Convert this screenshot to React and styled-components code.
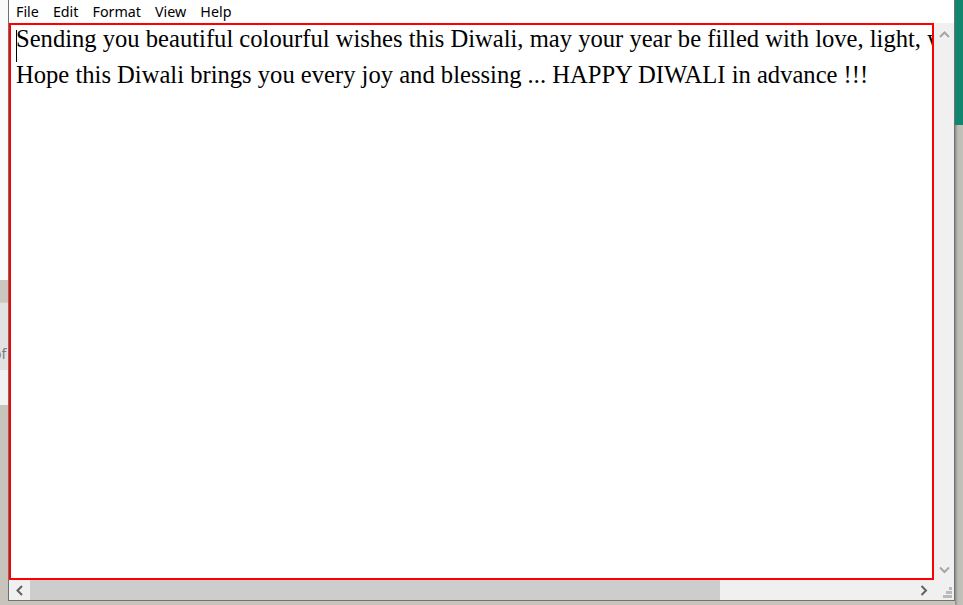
import React from 'react';
import styled, { createGlobalStyle } from 'styled-components';

const GlobalStyle = createGlobalStyle`
  html, body {
    margin: 0;
    padding: 0;
  }
  body {
    width: 963px;
    height: 605px;
    overflow: hidden;
    background: #c8c4bc;
  }
`;

const Desktop = styled.div`
  display: grid;
  grid-template-columns: 8px 947px 8px;
  width: 963px;
  height: 605px;
  background: #c8c4bc;
`;

const Strip = styled.div`
  display: flex;
  flex-direction: column;
  height: 605px;
  overflow: hidden;
`;

const StripPart = styled.div`
  height: ${p => p.h}px;
  flex: ${p => (p.grow ? 1 : 'none')};
  background: ${p => p.bg};
  border-top: ${p => (p.line ? '1px solid #cfcfcf' : 'none')};
  overflow: hidden;
  display: flex;
  align-items: flex-start;
  padding-top: ${p => p.pt || 0}px;
  box-sizing: border-box;
`;

const Fragment = styled.span`
  font-family: "Noto Sans", sans-serif;
  font-size: 14px;
  line-height: 18px;
  color: #7a7a7a;
  margin-left: -7px;
  white-space: nowrap;
`;

const Window = styled.div`
  align-self: start;
  height: 601px;
  display: flex;
  flex-direction: column;
  border: 1px solid #707070;
  border-top: none;
  box-sizing: border-box;
  background: #fff;
`;

const MenuBar = styled.div`
  height: 23px;
  display: flex;
  align-items: center;
  background: #fff;
  flex: none;
`;

const MenuItem = styled.span`
  font-family: "Noto Sans", sans-serif;
  font-size: 14.3px;
  color: #000;
  padding: 0 7px;
  line-height: 19px;
`;

const Body = styled.div`
  flex: 1;
  display: flex;
  min-height: 0;
`;

const EditArea = styled.div`
  flex: 1;
  position: relative;
  border: 2px solid #ff0000;
  background: #fff;
  overflow: hidden;
`;

const Text = styled.div`
  margin-top: -4px;
  padding-left: 5px;
  font-family: "Liberation Serif", "Times New Roman", serif;
  font-size: 24.6px;
  line-height: 36px;
  white-space: pre;
  color: #000;
`;

const Caret = styled.div`
  position: absolute;
  left: 5px;
  top: 5px;
  width: 1px;
  height: 32px;
  background: #000;
`;

const VScroll = styled.div`
  width: 20px;
  flex: none;
  background: #f0f0f0;
  display: flex;
  flex-direction: column;
  justify-content: space-between;
`;

const ArrowBtn = styled.div`
  height: ${p => p.h || 20}px;
  width: ${p => p.w || 20}px;
  flex: none;
  display: flex;
  align-items: center;
  justify-content: center;
  background: #f0f0f0;
`;

const BottomRow = styled.div`
  height: 20px;
  flex: none;
  display: flex;
  background: #f0f0f0;
`;

const Thumb = styled.div`
  width: 690px;
  flex: none;
  background: #cdcdcd;
`;

const Track = styled.div`
  flex: 1;
  background: #f0f0f0;
`;

const Corner = styled.div`
  width: 20px;
  flex: none;
  background: #f0f0f0;
  display: flex;
  align-items: flex-end;
  justify-content: flex-end;
`;

const Chevron = ({ dir, color }) => {
  const pts = {
    up: '1,6 5.5,1.5 10,6',
    down: '1,1.5 5.5,6 10,1.5',
    left: '6,1 1.5,5.5 6,10',
    right: '1.5,1 6,5.5 1.5,10',
  }[dir];
  const vertical = dir === 'up' || dir === 'down';
  return (
    <svg width={vertical ? 11 : 8} height={vertical ? 8 : 11} viewBox={vertical ? '0 0 11 8' : '0 0 8 11'}>
      <polyline points={pts} fill="none" stroke={color} strokeWidth="2" />
    </svg>
  );
};

const Grip = () => (
  <svg width="14" height="14" viewBox="0 0 14 14">
    {[[9, 1], [6, 5], [9, 5], [3, 9], [6, 9], [9, 9]].map(([x, y], i) => (
      <rect key={i} x={x} y={y} width="3" height="3" fill="#b9b9b9" />
    ))}
  </svg>
);

export default function App() {
  return (
    <>
      <GlobalStyle />
      <Desktop>
        <Strip>
          <StripPart h={280} bg="#fafafa" />
          <StripPart h={22} bg="#cbc7bf" />
          <StripPart h={68} bg="#e2e2e2" line pt={42}>
            <Fragment>of</Fragment>
          </StripPart>
          <StripPart h={35} bg="#f2f2f2" />
          <StripPart grow bg="#c8c4bc" />
        </Strip>

        <Window>
          <MenuBar>
            <MenuItem>File</MenuItem>
            <MenuItem>Edit</MenuItem>
            <MenuItem>Format</MenuItem>
            <MenuItem>View</MenuItem>
            <MenuItem>Help</MenuItem>
          </MenuBar>
          <Body>
            <EditArea>
              <Text>
                {'Sending you beautiful colourful wishes this Diwali, may your year be filled with love, light, warmth and happiness.\nHope this Diwali brings you every joy and blessing ... HAPPY DIWALI in advance !!!'}
              </Text>
              <Caret />
            </EditArea>
            <VScroll>
              <ArrowBtn h={23}>
                <Chevron dir="up" color="#a6a6a6" />
              </ArrowBtn>
              <ArrowBtn h={21}>
                <Chevron dir="down" color="#a6a6a6" />
              </ArrowBtn>
            </VScroll>
          </Body>
          <BottomRow>
            <ArrowBtn w={21}>
              <Chevron dir="left" color="#606060" />
            </ArrowBtn>
            <Thumb />
            <Track />
            <ArrowBtn w={21}>
              <Chevron dir="right" color="#606060" />
            </ArrowBtn>
            <Corner>
              <Grip />
            </Corner>
          </BottomRow>
        </Window>

        <Strip>
          <StripPart h={125} bg="#10866f" />
          <StripPart grow bg="linear-gradient(to right, #8d8d88 0, #bdbdb6 3px, #c2c2bb 100%)" />
        </Strip>
      </Desktop>
    </>
  );
}
